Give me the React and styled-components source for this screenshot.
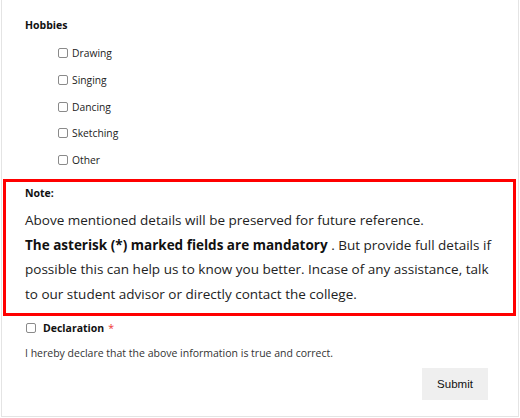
import React from "react";
import styled, { createGlobalStyle } from "styled-components";

const Global = createGlobalStyle`
  html, body { margin: 0; padding: 0; background: #fff; }
  body { font-family: "Open Sans", "Noto Sans", sans-serif; color: #111; }
`;

const Frame = styled.div`
  box-sizing: border-box;
  margin-left: 1px;
  width: 518px;
  height: 417px;
  border: 1px solid #e4e4e4;
  border-top: none;
  display: flex;
  flex-direction: column;
`;

const Section = styled.div`
  padding: 17px 0 0 23px;
`;

const Heading = styled.div`
  font-size: 10.5px;
  font-weight: 700;
  line-height: 16px;
`;

const List = styled.div`
  display: flex;
  flex-direction: column;
  gap: 10.8px;
  padding: 12px 0 0 33px;
`;

const CheckRow = styled.label`
  display: flex;
  align-items: center;
  gap: 4px;
  font-size: 10.3px;
  line-height: 16px;
  color: #222;
`;

const Box = styled.span`
  box-sizing: border-box;
  width: 10px;
  height: 10px;
  border: 1px solid #8a8a8a;
  border-radius: 2px;
  background: #fff;
  flex: none;
`;

const NoteBox = styled.div`
  margin: 11px 2px 0 1px;
  border: 3px solid #ff0000;
  padding: 3px 18px 6px 19px;
`;

const NoteTitle = styled.div`
  font-size: 10.5px;
  font-weight: 700;
  line-height: 16px;
`;

const Para = styled.p`
  margin: 7px 0 0;
  font-size: 13.5px;
  line-height: 24.6px;
  color: #222;
  b { font-weight: 700; color: #111; }
`;

const Declare = styled.div`
  padding: 4px 0 0 24px;
`;

const DeclRow = styled.label`
  display: flex;
  align-items: center;
  gap: 7px;
  font-size: 10.5px;
  font-weight: 700;
  line-height: 16px;
`;

const Star = styled.span`
  color: #e33;
  font-weight: 400;
  margin-left: 4px;
`;

const Small = styled.div`
  margin-top: 10px;
  margin-left: -1px;
  font-size: 10.5px;
  line-height: 14px;
  color: #333;
`;

const Actions = styled.div`
  display: flex;
  justify-content: flex-end;
  padding: 8px 30px 0 0;
`;

const Button = styled.button`
  width: 66px;
  height: 32px;
  border: none;
  background: #efefef;
  font-family: "Liberation Sans", Arial, sans-serif;
  font-size: 11.5px;
  color: #111;
`;

const hobbies = ["Drawing", "Singing", "Dancing", "Sketching", "Other"];

export default function App() {
  return (
    <>
      <Global />
      <Frame>
        <Section>
          <Heading>Hobbies</Heading>
          <List>
            {hobbies.map((h) => (
              <CheckRow key={h}>
                <Box />
                {h}
              </CheckRow>
            ))}
          </List>
        </Section>
        <NoteBox>
          <NoteTitle>Note:</NoteTitle>
          <Para>
            Above mentioned details will be preserved for future reference.
            <br />
            <b>The asterisk (*) marked fields are mandatory</b> . But provide full details if
            possible this can help us to know you better. Incase of any assistance, talk
            to our student advisor or directly contact the college.
          </Para>
        </NoteBox>
        <Declare>
          <DeclRow>
            <Box />
            <span>
              Declaration<Star>*</Star>
            </span>
          </DeclRow>
          <Small>I hereby declare that the above information is true and correct.</Small>
        </Declare>
        <Actions>
          <Button>Submit</Button>
        </Actions>
      </Frame>
    </>
  );
}
